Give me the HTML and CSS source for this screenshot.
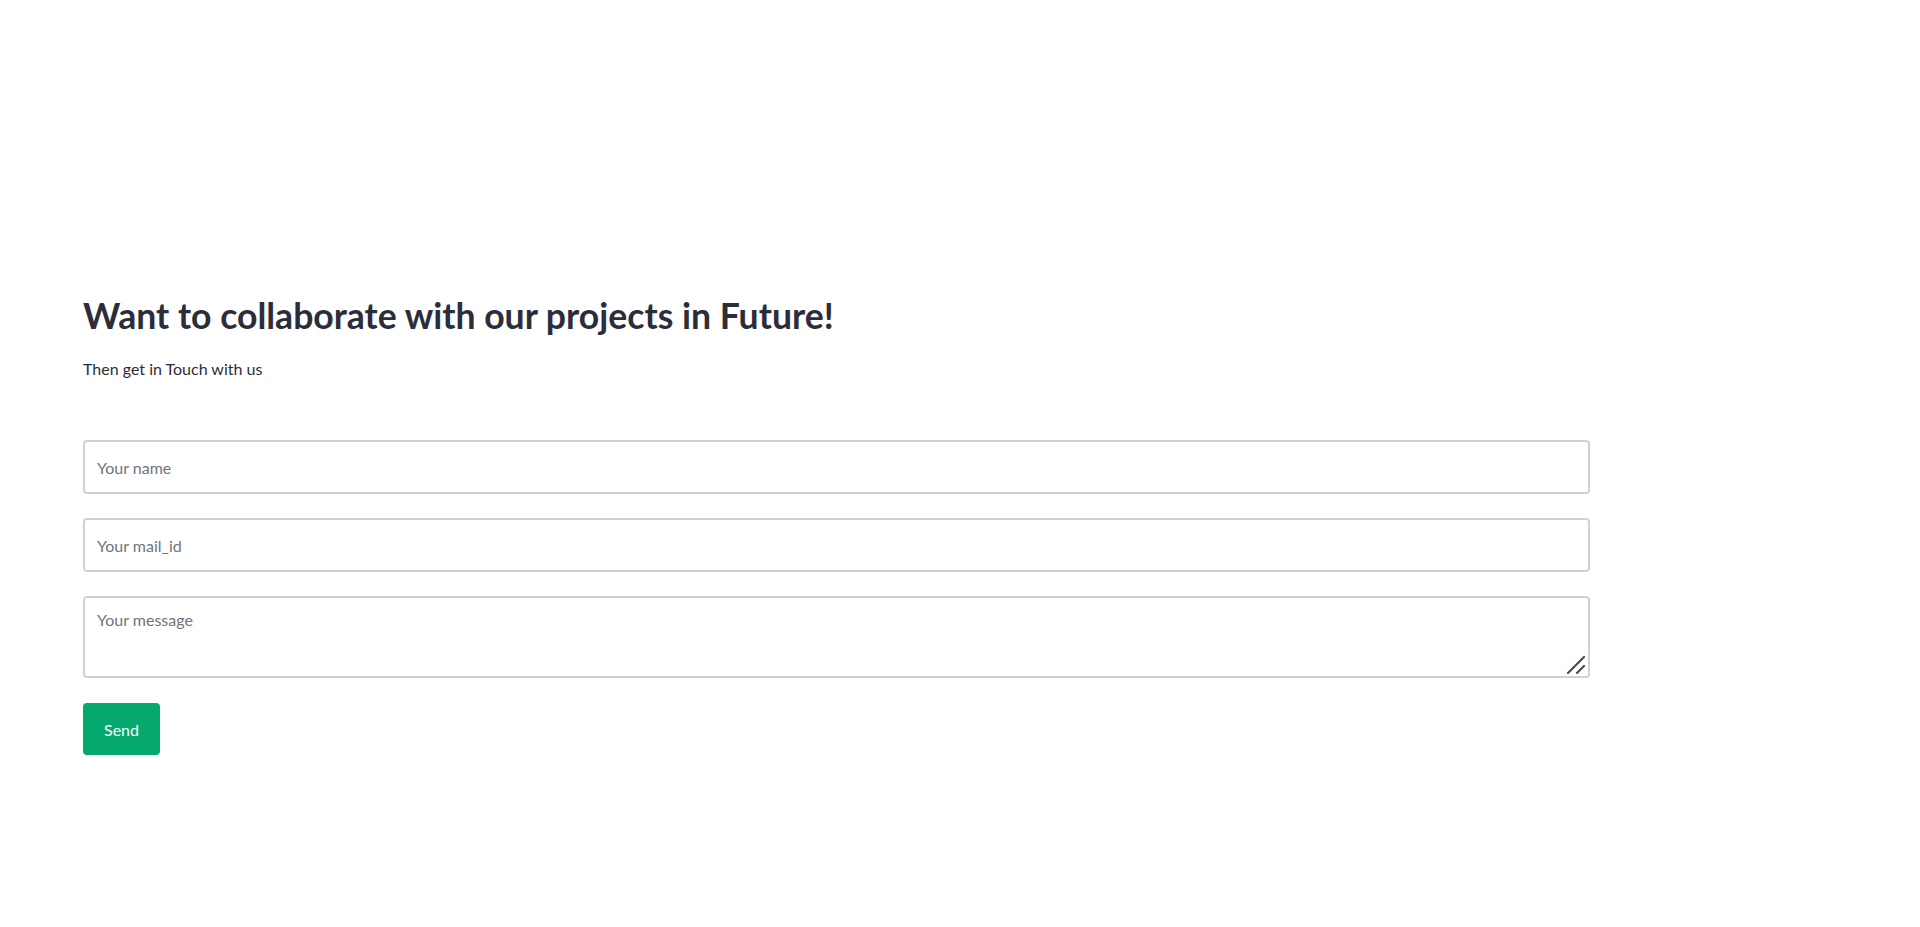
FILE: index.html
```html
<!DOCTYPE html>
<html lang="en">
<head>
<meta charset="utf-8">
<title>Contact</title>
<link rel="stylesheet" href="styles.css">
</head>
<body>
<section class="contact">
  <h2 class="contact-title">Want to collaborate with our projects in Future!</h2>
  <p class="contact-sub">Then get in Touch with us</p>
  <form class="contact-form">
    <input class="field" type="text" placeholder="Your name">
    <input class="field" type="email" placeholder="Your mail_id">
    <div class="area-wrap">
      <textarea class="field field-area" placeholder="Your message"></textarea>
      <svg class="grip" width="20" height="20" viewBox="0 0 20 20" aria-hidden="true">
        <line x1="2" y1="18" x2="18" y2="2" stroke="#4a4a4a" stroke-width="2.2" stroke-linecap="round"/>
        <line x1="11" y1="18" x2="18" y2="11" stroke="#4a4a4a" stroke-width="2.2" stroke-linecap="round"/>
      </svg>
    </div>
    <div class="actions"><button class="btn-send" type="button">Send</button></div>
  </form>
</section>
</body>
</html>
```

FILE: styles.css
```css
* { box-sizing: border-box; }
html, body { margin: 0; background: #fff; }
body {
  font-family: Lato, "Open Sans", "Liberation Sans", sans-serif;
  color: #2b2e3a;
}
.contact {
  padding: 294px 83px 0 83px;
}
.contact-title {
  margin: 0;
  font-size: 35.6px;
  line-height: 43px;
  font-weight: 700;
  color: #2b2e3a;
}
.contact-sub {
  margin: 22px 0 0 0;
  font-size: 16px;
  line-height: 20px;
  color: #2b2e3a;
}
.contact-form {
  margin-top: 61px;
  width: 1507px;
  display: flex;
  flex-direction: column;
  gap: 24px;
}
.field {
  display: block;
  width: 100%;
  height: 54px;
  border: 2px solid #d2d2d2;
  border-radius: 4px;
  padding: 0 12px;
  font-family: inherit;
  font-size: 16px;
  color: #2b2e3a;
  background: #fff;
  outline: none;
}
.field::placeholder { color: #6f747d; }
.area-wrap { position: relative; }
.field-area {
  height: 82px;
  padding: 12px 12px;
  resize: none;
  line-height: 20px;
}
.grip {
  position: absolute;
  right: 4px;
  bottom: 3px;
  pointer-events: none;
}
.actions { display: flex; margin-top: 1px; }
.btn-send {
  width: 77px;
  height: 52px;
  border: none;
  border-radius: 4px;
  background: #05a86d;
  color: #fff;
  font-family: inherit;
  font-size: 16px;
  cursor: pointer;
}
```
